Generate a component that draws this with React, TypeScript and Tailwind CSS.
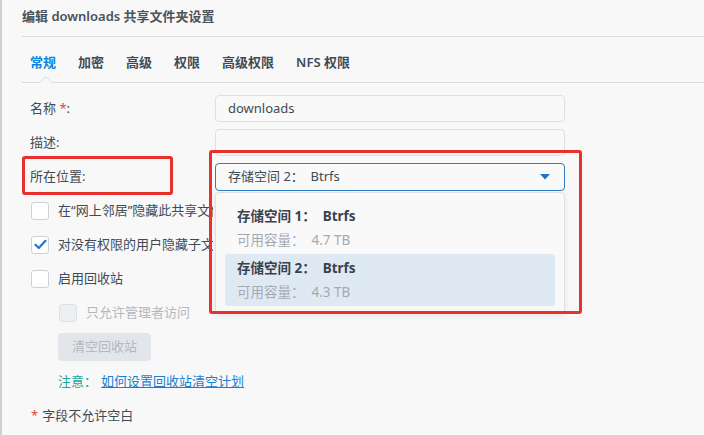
import React from 'react'

const FONT = '[font-family:"Noto_Sans","Noto_Sans_CJK_SC",sans-serif]'

const TABS = ['常规', '加密', '高级', '权限', '高级权限', 'NFS 权限']

function Checkbox({ checked, disabled }: { checked?: boolean; disabled?: boolean }) {
  return (
    <span
      className={`w-[18px] h-[18px] rounded-[3px] border flex items-center justify-center flex-shrink-0 ${
        disabled ? 'bg-[#eceff2] border-[#dde1e6]' : 'bg-white border-[#cdd2d8]'
      }`}
    >
      {checked && (
        <svg width="13" height="11" viewBox="0 0 13 11" fill="none">
          <path d="M1.5 5.8 L4.8 9 L11.5 1.8" stroke="#1d76d2" strokeWidth="2.2" strokeLinecap="round" strokeLinejoin="round" />
        </svg>
      )}
    </span>
  )
}

export default function App() {
  return (
    <div className={`relative w-[704px] h-[435px] overflow-hidden bg-[#f8f8f8] border-l-2 border-[#cfcfcf] text-[13px] text-[#414b55] ${FONT}`}>
      <div className="ml-[20px]">
        {/* Title */}
        <div className="h-[37px] border-b border-[#d9dde2] flex items-center">
          <span className="text-[13px] font-semibold text-[#4a525b] pb-[3px]">编辑 downloads 共享文件夹设置</span>
        </div>

        {/* Tabs */}
        <div className="relative h-[46px] border-b border-[#d9dde2] flex items-center pl-[8px] gap-[22px] text-[13px] font-semibold pt-[6px]">
          {TABS.map((t, i) => (
            <span key={t} className={i === 0 ? 'text-[#0a86e0]' : 'text-[#414b55]'}>{t}</span>
          ))}
          <span className="absolute left-[18px] bottom-[-1px] w-[12px] h-[7px] bg-[#f8f8f8] overflow-hidden">
            <svg width="12" height="7" viewBox="0 0 12 7">
              <path d="M0 6.5 L6 0.8 L12 6.5" stroke="#d9dde2" strokeWidth="1" fill="none" />
            </svg>
          </span>
        </div>

        {/* Form */}
        <div className="mt-[12px] flex flex-col gap-[7px]">
          <div className="h-[27px] flex items-center">
            <span className="w-[193px] pl-[8px]">名称 <span className="text-[#e0463c]">*</span>:</span>
            <div className="w-[350px] h-[27px] rounded-[4px] border border-[#dce0e5] bg-[#f9f9f9] flex items-center px-[12px] text-[13px]">downloads</div>
          </div>
          <div className="h-[27px] flex items-center">
            <span className="w-[193px] pl-[8px]">描述:</span>
            <div className="w-[350px] h-[27px] rounded-[4px] border border-[#dce0e5] bg-[#f9f9f9]" />
          </div>
          <div className="h-[27px] flex items-center">
            <span className="w-[193px] pl-[8px]">所在位置:</span>
            <div className="w-[350px] h-[28px] rounded-[4px] border border-[#2c7ec8] bg-[#f9f9f9] flex items-center justify-between px-[12px] text-[13px]">
              <span className="whitespace-pre">存储空间 2：  Btrfs</span>
              <svg width="10" height="6" viewBox="0 0 10 6" className="mr-[2px]">
                <path d="M0 0 H10 L5 5.5 Z" fill="#1f73c4" />
              </svg>
            </div>
          </div>
          <div className="h-[27px] flex items-center gap-[9px] pl-[9px]">
            <Checkbox />
            <span className="w-[155px] overflow-hidden whitespace-nowrap">在“网上邻居”隐藏此共享文件夹</span>
          </div>
          <div className="h-[27px] flex items-center gap-[9px] pl-[9px]">
            <Checkbox checked />
            <span className="w-[155px] overflow-hidden whitespace-nowrap">对没有权限的用户隐藏子文件夹和文件</span>
          </div>
          <div className="h-[27px] flex items-center gap-[9px] pl-[9px]">
            <Checkbox />
            <span>启用回收站</span>
          </div>
          <div className="h-[27px] flex items-center gap-[9px] pl-[37px] text-[#b3b8be]">
            <Checkbox disabled />
            <span>只允许管理者访问</span>
          </div>
          <div className="h-[28px] flex items-center pl-[36px]">
            <div className="w-[93px] h-[28px] rounded-[4px] bg-[#e2e6ea] text-[#b3b8be] flex items-center justify-center">清空回收站</div>
          </div>
          <div className="h-[27px] flex items-center pl-[36px] gap-[4px]">
            <span className="text-[#1fa39a]">注意：</span>
            <span className="text-[#1a7fd4] underline">如何设置回收站清空计划</span>
          </div>
          <div className="h-[27px] flex items-center pl-[9px] gap-[4px]">
            <span className="text-[#e0463c]">*</span>
            <span>字段不允许空白</span>
          </div>
        </div>
      </div>

      {/* Dropdown menu */}
      <div className="absolute left-[213px] top-[192px] w-[350px] h-[122px] rounded-[4px] border border-[#dde1e6] bg-[#f9f9f9] shadow-[0_2px_6px_rgba(0,0,0,0.08)] px-[9px] pt-[9px]">
        <div className="h-[52px] px-[12px] flex flex-col justify-center gap-[8px]">
          <span className="font-bold text-[13.5px] text-[#3a424b] leading-[16px] whitespace-pre">存储空间 1：  Btrfs</span>
          <span className="text-[#a4aab0] text-[13.5px] leading-[16px] whitespace-pre">可用容量：  4.7 TB</span>
        </div>
        <div className="h-[52px] px-[12px] flex flex-col justify-center gap-[8px] rounded-[3px] bg-[#dfe9f4]">
          <span className="font-bold text-[13.5px] text-[#3a424b] leading-[16px] whitespace-pre">存储空间 2：  Btrfs</span>
          <span className="text-[#a4aab0] text-[13.5px] leading-[16px] whitespace-pre">可用容量：  4.3 TB</span>
        </div>
      </div>

      {/* Annotation boxes */}
      <div className="absolute left-[20px] top-[156px] w-[151px] h-[39px] border-[3px] border-[#e8312c] rounded-[3px]" />
      <div className="absolute left-[207px] top-[150px] w-[373px] h-[164px] border-[3px] border-[#e8312c] rounded-[3px]" />
    </div>
  )
}
